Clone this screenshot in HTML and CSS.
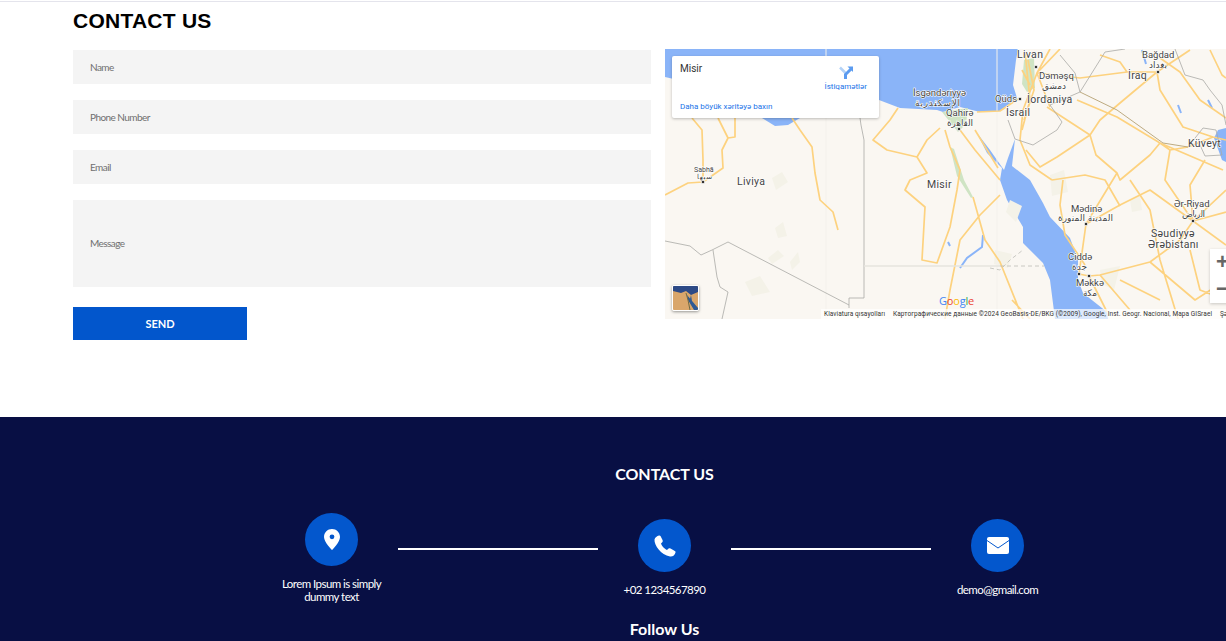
FILE: index.html
```html
<!DOCTYPE html>
<html lang="en">
<head>
    <meta charset="UTF-8" />
    <title>Contact Us</title>
    <link rel="stylesheet" href="styles.css">
</head>
<body>
    <div class="topline"></div>

    <section class="contact">
        <h2 class="contact-title">CONTACT US</h2>
        <div class="contact-row">
            <form class="contact-form">
                <input type="text" class="field" placeholder="Name" />
                <input type="text" class="field" placeholder="Phone Number" />
                <input type="text" class="field" placeholder="Email" />
                <textarea class="field field-message" placeholder="Message"></textarea>
                <button type="button" class="send-btn">SEND</button>
            </form>

            <div class="map">
                <svg class="map-canvas" viewBox="665 49 561 270" width="561" height="270">
                    <rect class="land" x="665" y="49" width="561" height="270" />

                    <!-- sea -->
                    <path class="water" d="M665 49H1018L1016 60 1013 85 1017 98 1000 111 980 112 960 107 943 112 937 110 900 108 879 100 860 96 800 118 788 125 775 126 762 118 740 100 700 85 665 77Z" />
                    <path class="water" d="M977 133 987 153 1002 168 1000 180 1007 200 1023 227 1023 243 1043 263 1050 280 1055 319H1108L1107 312 1083 293 1078 280 1078 260 1070 238 1050 217 1043 203 1030 180 1012 166 1015 139 1008 158 1004 170 990 150Z" />
                    <path class="water" d="M1226 128 1218 130 1214 138 1222 160 1226 162Z" />
                    <path class="water-line" d="M983 235 982 247 967 258 960 268M948 242 950 246M1142 50 1146 64M1208 100 1212 108M1178 105 1181 113" />

                    <!-- green strip and desert patches -->
                    <path class="green" d="M942 112 968 108 966 124 958 132 950 122ZM1024 60 1034 58 1035 88 1027 92 1022 84ZM950 147 954 149 964 180 973 197 971 198 957 176Z" />
                    <path class="sand" d="M772 178 782 172 788 182 776 190ZM768 258 778 250 784 256 772 264ZM790 262 798 252 800 262 792 270ZM745 282 760 276 770 292 752 296ZM775 228 783 222 787 236 778 238ZM1010 200 1022 206 1016 222 1006 212ZM995 250 1012 254 1008 268 994 264ZM1100 270 1120 266 1114 290 1102 284ZM1050 175 1064 170 1068 192 1052 196ZM1130 200 1140 196 1142 210 1132 212Z" />

                    <!-- tile seams -->
                    <path class="seam" d="M826 49V319M997 49V319" />

                    <!-- roads -->
                    <path class="road" d="M692 118 702 130 703 160 703 182 688 183 665 195M718 118 728 138 722 150 723 168 703 182M735 118 735 137 728 138M792 118 800 130 812 147 815 173 820 200 833 212 838 230M898 108 890 120 873 140 887 150 917 157 927 173 910 180 905 190 925 207 922 260 937 263 950 227 957 190 960 170 950 147 945 130M940 128 927 140 917 157M960 130 975 150 1000 180M975 130 998 168" />
                    <path class="road" d="M977 112 1000 111 1018 99M1037 73 1080 78 1127 72 1157 72 1160 90 1183 127 1213 137 1226 140M1037 73 1023 110 1020 140 1030 165 1052 180M1047 107 1090 135 1100 120 1120 103 1157 72M1077 100 1117 117 1160 143 1223 170M1090 135 1057 157 1040 167 1026 150M1090 135 1096 155 1117 173 1120 180 1150 155 1160 143 1170 150 1188 147 1213 137M1117 173 1086 224 1079 274 1089 276 1107 312M1086 224 1120 205 1150 190 1193 221 1226 212M1193 221 1180 240 1150 262 1100 275 1089 276M1193 221 1226 245M1170 150 1165 180 1193 221M1160 58 1180 72 1200 100 1226 118M1157 72 1190 50M1050 49 1037 73 1060 49M1100 55 1120 62 1127 72M1210 50 1222 75 1226 78M1025 52 1030 100 1022 130M1037 73 1050 107M1028 60 1034 90 1024 120M1022 70 1030 85" />
                    <path class="road" d="M1000 195 980 215 960 240 950 290 945 319M973 197 985 240 1000 262 1023 319M1063 180 1060 205 1065 235 1085 265M1130 180 1150 210 1160 260 1178 319M1120 206 1105 180 1085 175 1052 180M1190 250 1200 290 1226 300M1226 190 1193 221M1100 275 1130 310M1012 300 1030 319M1205 160 1190 185 1193 221M1150 262 1195 300 1226 280M1120 280 1160 300" />

                    <!-- borders -->
                    <path class="border" d="M860 118 861 125 864 140V298H849V308M849 305 728 242 712 250 701 255 690 246 665 241M713 250 717 277 720 287 728 292 722 319M1008 120 1015 139 1033 145 1057 130 1062 122 1050 105M1080 92 1050 105M1080 92 1075 73 1060 55M1080 92 1105 52 1125 49M1188 147 1203 128 1216 130 1222 155 1205 156 1200 145M1175 49 1185 75 1203 80 1210 90 1222 105 1226 125" />
                    <path class="border-dark" d="M1080 92 1117 110 1163 143 1188 147" />
                    <path class="border-soft" d="M864 266H1000" />
                    <path class="border-dash" d="M990 268 1000 270 1010 260 1023 250M1000 266H1044" />

                    <!-- place names -->
                    <g class="labels">
                        <text x="1017" y="58" class="big">Livan</text>
                        <text x="1039" y="79">Dəməşq</text>
                        <text x="1042" y="89" class="ar" textLength="24">دمشق</text>
                        <text x="1142" y="58">Bağdad</text>
                        <text x="1149" y="68" class="ar" textLength="18">بغداد</text>
                        <text x="1128" y="79" class="big">İraq</text>
                        <text x="995" y="102">Qüds</text>
                        <text x="1027" y="103" class="big">İordaniya</text>
                        <text x="1006" y="116" class="big">İsrail</text>
                        <text x="946" y="116">Qahirə</text>
                        <text x="947" y="126" class="ar" textLength="26">القاهرة</text>
                        <text x="913" y="96">İsgəndəriyyə</text>
                        <text x="915" y="106" class="ar" textLength="45">الإسكندرية</text>
                        <text x="1188" y="147" class="big">Küveyt</text>
                        <text x="927" y="188" class="big">Misir</text>
                        <text x="737" y="185" class="big">Liviya</text>
                        <text x="694" y="172" class="small">Sabhā</text>
                        <text x="697" y="179" class="small ar" textLength="15">سبها</text>
                        <text x="1071" y="212">Mədinə</text>
                        <text x="1058" y="221" class="ar" textLength="55">المدينة المنورة</text>
                        <text x="1174" y="207">Ər-Riyad</text>
                        <text x="1182" y="217" class="ar" textLength="23">الرياض</text>
                        <text x="1151" y="237" class="big">Səudiyyə</text>
                        <text x="1148" y="248" class="big">Ərəbistanı</text>
                        <text x="1068" y="260">Ciddə</text>
                        <text x="1072" y="270" class="ar" textLength="15">جدة</text>
                        <text x="1076" y="286">Məkkə</text>
                        <text x="1083" y="296" class="ar" textLength="14">مكة</text>
                    </g>

                    <!-- city dots -->
                    <g class="city">
                        <circle cx="703" cy="182" r="1.8" />
                        <circle cx="959" cy="129" r="1.8" />
                        <circle cx="1036" cy="67" r="1.8" />
                        <circle cx="1020" cy="99" r="1.8" />
                        <circle cx="1158" cy="72" r="1.8" />
                        <circle cx="1086" cy="224" r="1.8" />
                        <circle cx="1193" cy="221" r="1.8" />
                        <circle cx="1079" cy="274" r="1.8" />
                        <circle cx="1089" cy="276" r="1.8" />
                    </g>

                    <text class="google" x="939" y="305"><tspan fill="#4285f4">G</tspan><tspan fill="#ea4335">o</tspan><tspan fill="#fbbc05">o</tspan><tspan fill="#4285f4">g</tspan><tspan fill="#34a853">l</tspan><tspan fill="#ea4335">e</tspan></text>

                    <rect class="attr-bar" x="821" y="309" width="405" height="10" />
                    <g class="attr">
                        <text x="824" y="316" textLength="61">Klaviatura qısayolları</text>
                        <text x="893" y="316" textLength="319">Картографические данные ©2024 GeoBasis-DE/BKG (©2009), Google, Inst. Geogr. Nacional, Mapa GISrael</text>
                        <text x="1220" y="316">Şə</text>
                    </g>
                </svg>

                <div class="map-card">
                    <div class="map-card-top">
                        <span class="map-place">Misir</span>
                        <a class="map-dir">
                            <svg class="dir-icon" viewBox="0 0 14 13" width="14" height="13">
                                <path class="dir-left" d="M1 1.500 6.500 7" />
                                <path class="dir-main" d="M6.500 13V8.500L12 3" />
                                <path class="dir-head" d="M8.500 .5H14V6Z" />
                            </svg>
                            <span>İstiqamətlər</span>
                        </a>
                    </div>
                    <a class="map-bigger">Daha böyük xəritəyə baxın</a>
                </div>

                <div class="map-thumb">
                    <svg viewBox="0 0 25 24" width="25" height="24">
                        <rect class="thumb-sand" width="25" height="24" />
                        <path class="thumb-north" d="M0 0H25V6L18 9 13 5 8 7 0 5Z" />
                        <path class="thumb-sea" d="M14 9 25 22V24H21L15 14ZM18 9 19 15 17 13Z" />
                        <path class="thumb-nile" d="M13 7 15 14 17 24" />
                    </svg>
                </div>

                <div class="map-zoom">
                    <span class="zoom-btn">+</span>
                    <span class="zoom-btn">−</span>
                </div>
            </div>
        </div>
    </section>

    <footer class="footer">
        <h3 class="footer-title">CONTACT US</h3>
        <div class="footer-row">
            <div class="footer-item">
                <div class="footer-icon">
                    <svg viewBox="0 0 16 21" width="16" height="21">
                        <path fill-rule="evenodd" d="M8 0C3.600 0 0 3.500 0 7.900 0 13 8 21 8 21s8-8 8-13.100C16 3.500 12.400 0 8 0zm0 10.200a2.400 2.400 0 1 1 0-4.800 2.400 2.400 0 0 1 0 4.800z" />
                    </svg>
                </div>
                <p>Lorem Ipsum is simply dummy text</p>
            </div>
            <div class="footer-line"></div>
            <div class="footer-item footer-item-low">
                <div class="footer-icon">
                    <svg viewBox="0 0 22 22" width="22" height="22">
                        <path d="M5 .5C3 1 1 2.500.5 4.500 0 10 7 20 16 21.500 18.500 22 21 20 21.500 17.500 21.800 16.500 21 16 20 15.500L16.500 13.500C15.500 13 14.500 13.200 14 14L13 15C10.500 14 7.500 10.500 7 8.500L8 7.500C8.800 6.800 9 6 8.500 5L6.500 1C6.200 .5 5.500 .3 5 .5Z" />
                    </svg>
                </div>
                <p>+02 1234567890</p>
            </div>
            <div class="footer-line"></div>
            <div class="footer-item footer-item-low">
                <div class="footer-icon">
                    <svg viewBox="0 0 22 17" width="22" height="17">
                        <rect width="22" height="17" rx="2" />
                        <path class="env-flap" d="M0 3.500 11 11 22 3.500" />
                    </svg>
                </div>
                <p>demo@gmail.com</p>
            </div>
        </div>
        <h3 class="footer-follow">Follow Us</h3>
    </footer>
</body>
</html>
```

FILE: styles.css
```css
html, body {
    margin: 0;
    height: 641px;
    overflow: hidden;
    background-color: white;
}

body {
    font-family: Lato, "Liberation Sans", sans-serif;
}

.topline {
    height: 1px;
    margin-top: 1px;
    background-color: #e4e4ec;
}

.contact {
    padding: 7px 0 77px 73px;
}

.contact-title {
    margin: 0 0 16px;
    font-family: "Liberation Sans", Arial, sans-serif;
    font-size: 21px;
    line-height: 24px;
    font-weight: bold;
    letter-spacing: .25px;
    color: black;
}

.contact-row {
    display: flex;
    align-items: flex-start;
    gap: 14px;
}

.contact-form {
    flex: none;
    width: 578px;
    display: flex;
    flex-direction: column;
    gap: 16px;
    padding-top: 1px;
}

.field {
    display: block;
    box-sizing: border-box;
    width: 100%;
    height: 34px;
    padding: 0 17px;
    border: none;
    outline: none;
    background-color: #f4f4f4;
    font-family: Lato, sans-serif;
    font-size: 10px;
    letter-spacing: -.55px;
    color: #666;
}

.field::placeholder {
    color: #6f6f6f;
    opacity: 1;
}

.field-message {
    height: 87px;
    padding-top: 37px;
    resize: none;
}

.send-btn {
    width: 174px;
    height: 33px;
    margin-top: 4px;
    border: none;
    background-color: #0256cc;
    color: white;
    font-family: Lato, sans-serif;
    font-size: 11px;
    font-weight: bold;
    cursor: pointer;
}

/* map */
.map {
    position: relative;
    flex: none;
    width: 561px;
    height: 270px;
    overflow: hidden;
}

.map-canvas {
    display: block;
}

.land { fill: #faf7f2; }
.water { fill: #8ab4f8; }
.water-line { fill: none; stroke: #8ab4f8; stroke-width: 2; }
.green { fill: #cfe4c4; }
.sand { fill: #f4f2e8; }
.seam { fill: none; stroke: #f4f1ec; stroke-width: 1; }
.road { fill: none; stroke: #fdd27f; stroke-width: 1.700; stroke-linejoin: round; }
.border { fill: none; stroke: #a9a9a6; stroke-width: .8; }
.border-dark { fill: none; stroke: #b5a274; stroke-width: .9; }
.border-soft { fill: none; stroke: #e6e4de; stroke-width: 1.500; }
.border-dash { fill: none; stroke: #bdbcb6; stroke-width: .8; stroke-dasharray: 4 3; }

.labels text {
    font-family: Roboto, "DejaVu Sans", sans-serif;
    font-size: 9.500px;
    fill: #444;
    stroke: white;
    stroke-width: 1.200px;
    paint-order: stroke;
}

.labels .big { font-size: 10.500px; letter-spacing: .3px; }
.labels .small { font-size: 7px; }
.labels .ar { font-family: "DejaVu Sans", sans-serif; font-size: 9px; }
.labels .small.ar { font-size: 7px; }

.city circle {
    fill: #333;
    stroke: white;
    stroke-width: .8;
}

.google {
    font-family: "Open Sans", Roboto, sans-serif;
    font-size: 11px;
    letter-spacing: -.2px;
}

.attr-bar { fill: rgba(255, 255, 255, .7); }

.attr text {
    font-family: Roboto, sans-serif;
    font-size: 6.500px;
    fill: #333;
}

.map-card {
    position: absolute;
    left: 7px;
    top: 7px;
    box-sizing: border-box;
    width: 207px;
    height: 62px;
    padding: 8px 8px;
    background-color: white;
    border-radius: 2px;
    box-shadow: 0 1px 3px rgba(0, 0, 0, .25);
    font-family: Roboto, sans-serif;
}

.map-card-top {
    display: flex;
    justify-content: space-between;
}

.map-place {
    font-size: 10px;
    line-height: 10px;
    color: #333;
}

.map-dir {
    display: flex;
    flex-direction: column;
    align-items: center;
    gap: 2px;
    margin-top: 2px;
    margin-right: 4px;
    font-size: 8px;
    line-height: 11px;
    color: #1a73e8;
}

.dir-left { fill: none; stroke: #b3d2f7; stroke-width: 2.500; }
.dir-main { fill: none; stroke: #5b9bf0; stroke-width: 3; }
.dir-head { fill: #5b9bf0; }

.map-bigger {
    display: block;
    margin-top: 9px;
    font-size: 8px;
    line-height: 11px;
    color: #1a73e8;
}

.map-thumb {
    position: absolute;
    left: 7px;
    top: 236px;
    box-sizing: border-box;
    width: 27px;
    height: 26px;
    border: 1px solid white;
    border-radius: 2px;
    box-shadow: 0 1px 3px rgba(0, 0, 0, .4);
    overflow: hidden;
}

.map-thumb svg { display: block; }
.thumb-sand { fill: #d9a66b; }
.thumb-north { fill: #2d4a86; }
.thumb-sea { fill: #2f5a94; }
.thumb-nile { fill: none; stroke: #6e6a45; stroke-width: 1; }

.map-zoom {
    position: absolute;
    left: 545px;
    top: 200px;
    display: flex;
    flex-direction: column;
    width: 30px;
    height: 54px;
    background-color: white;
    box-shadow: 0 1px 3px rgba(0, 0, 0, .2);
}

.zoom-btn {
    height: 27px;
    padding-left: 6px;
    font-family: "Liberation Sans", sans-serif;
    font-size: 22px;
    font-weight: bold;
    line-height: 26px;
    color: #666;
}

/* footer */
.footer {
    height: 224px;
    box-sizing: border-box;
    padding: 47px 0 0 103px;
    background-color: #080f44;
    color: white;
    text-align: center;
}

.footer-title {
    margin: 0 0 29px;
    font-size: 16px;
    line-height: 20px;
    font-weight: bold;
    letter-spacing: -.05px;
}

.footer-row {
    display: flex;
    justify-content: center;
    align-items: flex-start;
}

.footer-item {
    width: 133px;
}

.footer-item-low {
    margin-top: 6px;
}

.footer-item p {
    width: 110px;
    margin: 11px auto 0;
    font-size: 11.500px;
    line-height: 13px;
    letter-spacing: -.55px;
}

.footer-icon {
    display: flex;
    justify-content: center;
    align-items: center;
    width: 53px;
    height: 53px;
    margin: 0 auto;
    border-radius: 50%;
    background-color: #0357cd;
}

.footer-icon svg {
    fill: white;
}

.env-flap {
    fill: none;
    stroke: #0357cd;
    stroke-width: 1;
}

.footer-line {
    width: 200px;
    height: 2px;
    margin-top: 35px;
    background-color: white;
}

.footer-follow {
    margin: 16px 0 0;
    font-size: 16px;
    line-height: 20px;
    font-weight: bold;
}
```
